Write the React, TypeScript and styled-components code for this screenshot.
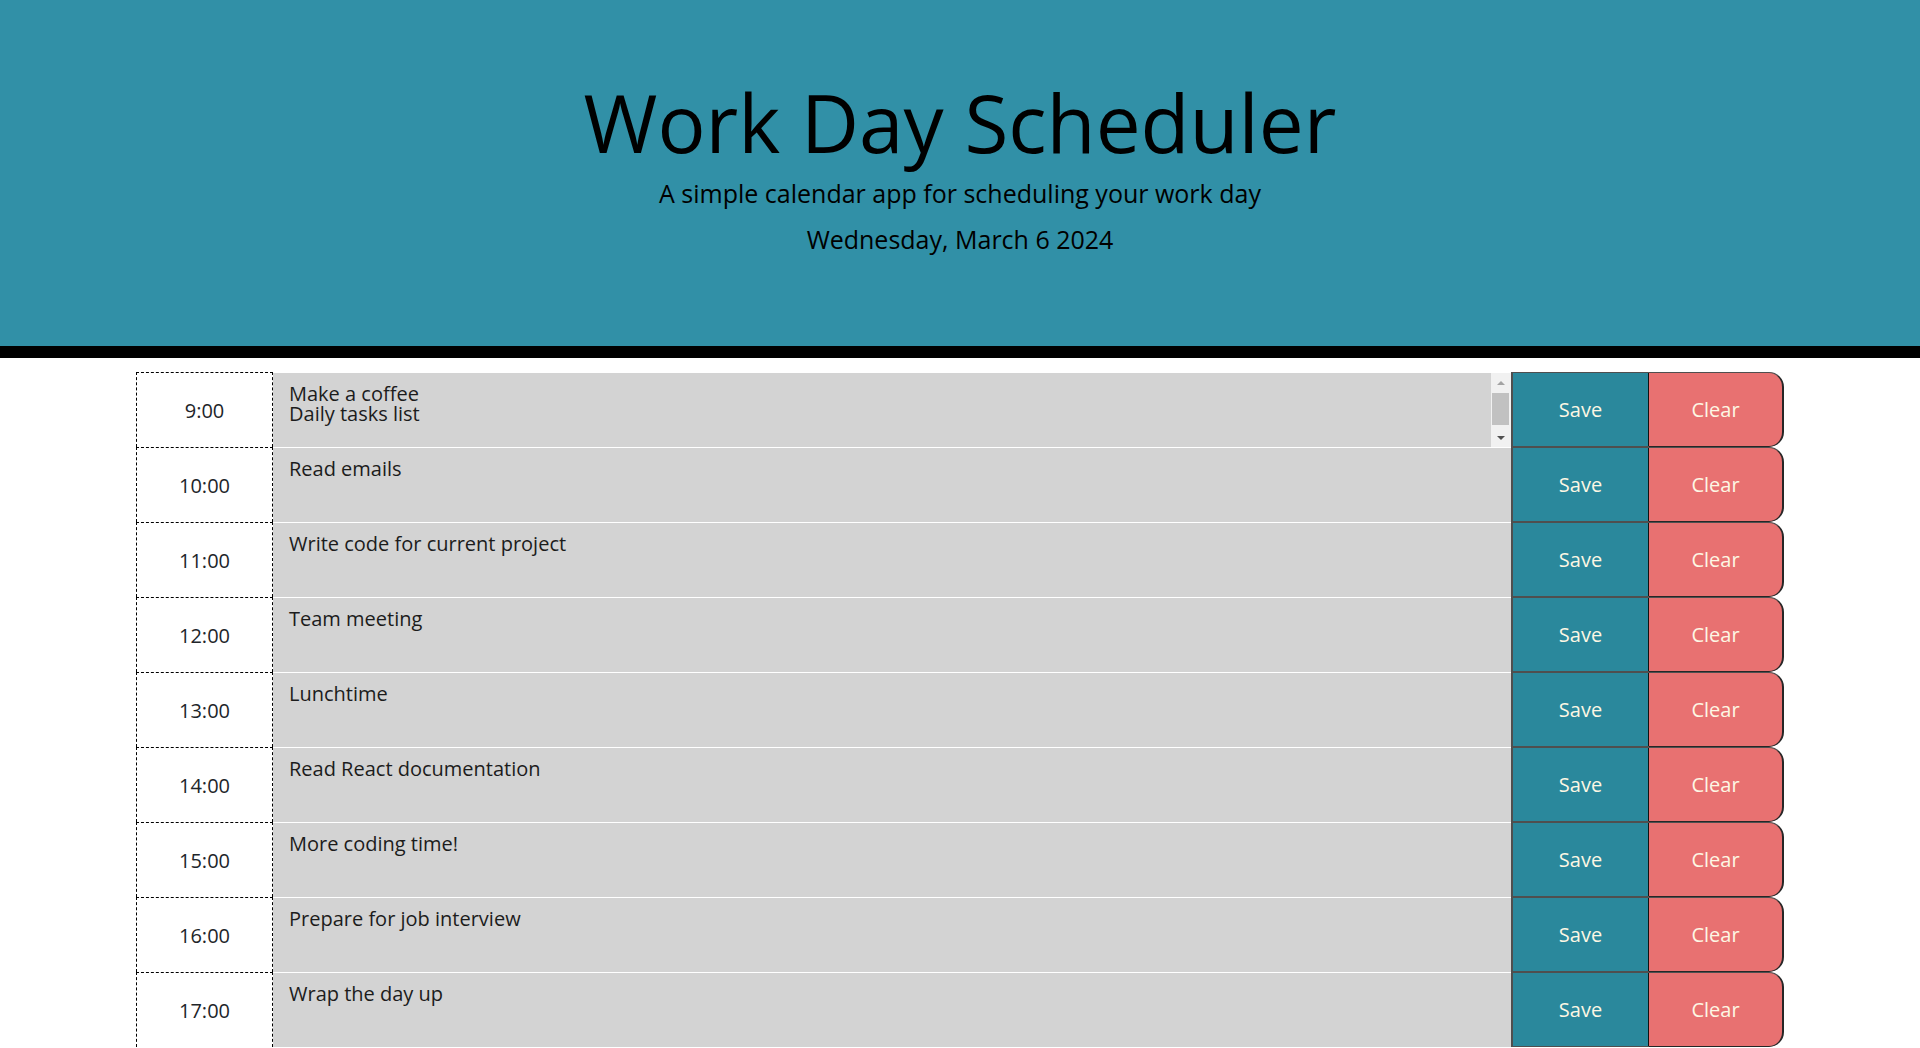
import React from "react";
import styled, { createGlobalStyle } from "styled-components";

const GlobalStyle = createGlobalStyle`
  html, body {
    margin: 0;
    padding: 0;
    background: #ffffff;
    font-family: "Open Sans", "Noto Sans", sans-serif;
    line-height: 1;
    color: #212529;
  }
  * { box-sizing: border-box; }
`;

const Header = styled.header`
  background-color: #3190a7;
  border-bottom: 12px solid #000000;
  height: 358px;
  padding-top: 74px;
  text-align: center;
  color: #000000;
`;

const Title = styled.h1`
  margin: 0;
  font-size: 80px;
  font-weight: 400;
  line-height: 1.2;
`;

const Lead = styled.p<{ $gap: number }>`
  margin: ${(p) => p.$gap}px 0 0;
  font-size: 25px;
  font-weight: 400;
  line-height: 1.2;
`;

const Container = styled.main`
  max-width: 1648px;
  margin: 14px auto 0;
`;

const Row = styled.div`
  display: grid;
  grid-template-columns: 137px 1fr 137px 136px;
  height: 75px;
`;

const Hour = styled.div`
  display: flex;
  align-items: center;
  justify-content: center;
  padding-top: 2px;
  background: #ffffff;
  color: #212529;
  font-size: 20px;
  border-top: 1px dashed #000000;
  border-left: 1px dashed #000000;
  border-right: 1px dashed #000000;
`;

const DescriptionCell = styled.div`
  display: flex;
  min-width: 0;
  background: #d3d3d3;
  border-top: 1px solid #ffffff;
`;

const Description = styled.textarea`
  display: block;
  flex: 1;
  min-width: 0;
  height: 100%;
  margin: 0;
  padding: 11px 16px 0;
  border: none;
  border-radius: 0;
  background: transparent;
  color: #1c1c1c;
  font-family: "Open Sans", "Noto Sans", sans-serif;
  font-size: 20px;
  line-height: 1;
  resize: none;
  outline: none;
  overflow: hidden;
`;

const ScrollTrack = styled.div`
  display: flex;
  flex-direction: column;
  width: 20px;
  padding: 0 2px 0 1px;
  background: #f1f1f1;
`;

const ScrollButton = styled.div`
  display: flex;
  align-items: center;
  justify-content: center;
  height: 18px;
`;

const Arrow = styled.span<{ $dir: "up" | "down" }>`
  width: 0;
  height: 0;
  border-left: 4.5px solid transparent;
  border-right: 4.5px solid transparent;
  ${(p) =>
    p.$dir === "up"
      ? "border-bottom: 4.5px solid #a3a3a3; margin-top: 2px;"
      : "border-top: 4.5px solid #505050; margin-top: -1px;"}
`;

const ScrollThumb = styled.div`
  height: 32px;
  margin-top: 2px;
  background: #c1c1c1;
`;

const ScrollSpacer = styled.div`
  flex: 1;
`;

const ActionButton = styled.button<{ $variant: "save" | "clear" }>`
  display: flex;
  align-items: center;
  justify-content: center;
  margin: 0;
  padding: 0;
  font-family: "Open Sans", "Noto Sans", sans-serif;
  font-size: 20px;
  color: #fdf7e4;
  cursor: pointer;
  background: ${(p) => (p.$variant === "save" ? "#2a889c" : "#e87171")};
  border-style: solid;
  border-width: ${(p) => (p.$variant === "save" ? "1px 0 1px 2px" : "1px 2px 1px 1px")};
  border-color: ${(p) =>
    p.$variant === "save"
      ? "#4f4f4f #4f4f4f #4f4f4f #4f4f4f"
      : "#4f4f4f #262626 #262626 #111111"};
  border-radius: ${(p) => (p.$variant === "save" ? "0" : "0 15px 15px 0")};
`;

const hours = [
  { time: "9:00", text: "Make a coffee\nDaily tasks list\n", overflow: true },
  { time: "10:00", text: "Read emails" },
  { time: "11:00", text: "Write code for current project" },
  { time: "12:00", text: "Team meeting" },
  { time: "13:00", text: "Lunchtime" },
  { time: "14:00", text: "Read React documentation" },
  { time: "15:00", text: "More coding time!" },
  { time: "16:00", text: "Prepare for job interview" },
  { time: "17:00", text: "Wrap the day up" },
];

function FakeScrollbar() {
  return (
    <ScrollTrack aria-hidden="true">
      <ScrollButton>
        <Arrow $dir="up" />
      </ScrollButton>
      <ScrollThumb />
      <ScrollSpacer />
      <ScrollButton>
        <Arrow $dir="down" />
      </ScrollButton>
    </ScrollTrack>
  );
}

export default function App() {
  return (
    <>
      <GlobalStyle />
      <Header>
        <Title>Work Day Scheduler</Title>
        <Lead $gap={8}>A simple calendar app for scheduling your work day</Lead>
        <Lead $gap={16}>Wednesday, March 6 2024</Lead>
      </Header>
      <Container>
        {hours.map((h) => (
          <Row key={h.time}>
            <Hour>{h.time}</Hour>
            <DescriptionCell>
              <Description defaultValue={h.text} spellCheck={false} />
              {h.overflow && <FakeScrollbar />}
            </DescriptionCell>
            <ActionButton $variant="save">Save</ActionButton>
            <ActionButton $variant="clear">Clear</ActionButton>
          </Row>
        ))}
      </Container>
    </>
  );
}
